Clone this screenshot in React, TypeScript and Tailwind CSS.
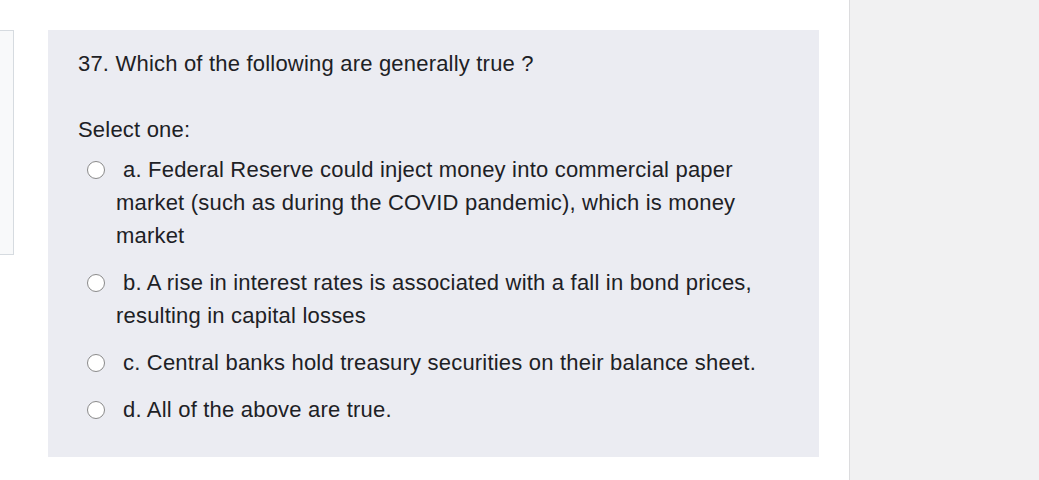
import React from "react";

const options = [
  "a. Federal Reserve could inject money into commercial paper market (such as during the COVID pandemic), which is money market",
  "b. A rise in interest rates is associated with a fall in bond prices, resulting in capital losses",
  "c. Central banks hold treasury securities on their balance sheet.",
  "d. All of the above are true.",
];

export default function App() {
  return (
    <div
      className="flex h-[480px] w-[1039px] bg-white text-[#1d2125] tracking-[0.2px]"
      style={{ fontFamily: '"Liberation Sans", Arial, sans-serif' }}
    >
      <div className="flex w-[849px] shrink-0 items-start pt-[30px]">
        <div className="h-[225px] w-[14px] shrink-0 border border-l-0 border-[#d6dbe0] bg-[#f8f9fa]" />
        <div className="ml-[34px] h-[427px] w-[771px] shrink-0 bg-[#ebecf2] pl-[30px] pr-[30px] pt-[17px]">
          <div className="text-[22px] leading-[33px]">
            37. Which of the following are generally true ?
          </div>
          <div className="mt-[33px] text-[22px] leading-[33px]">Select one:</div>
          <div className="mt-[7px] flex flex-col gap-[14px]">
            {options.map((o) => (
              <div key={o} className="flex items-start">
                <div className="ml-[9px] mt-[8px] h-[18px] w-[18px] shrink-0 rounded-full border border-[#8a8a8a] bg-white" />
                <div className="ml-[11px] text-[22px] leading-[33px] indent-[7px]">{o}</div>
              </div>
            ))}
          </div>
        </div>
      </div>
      <div className="h-full flex-1 border-l border-[#dcdcde] bg-[#f1f1f2]" />
    </div>
  );
}
